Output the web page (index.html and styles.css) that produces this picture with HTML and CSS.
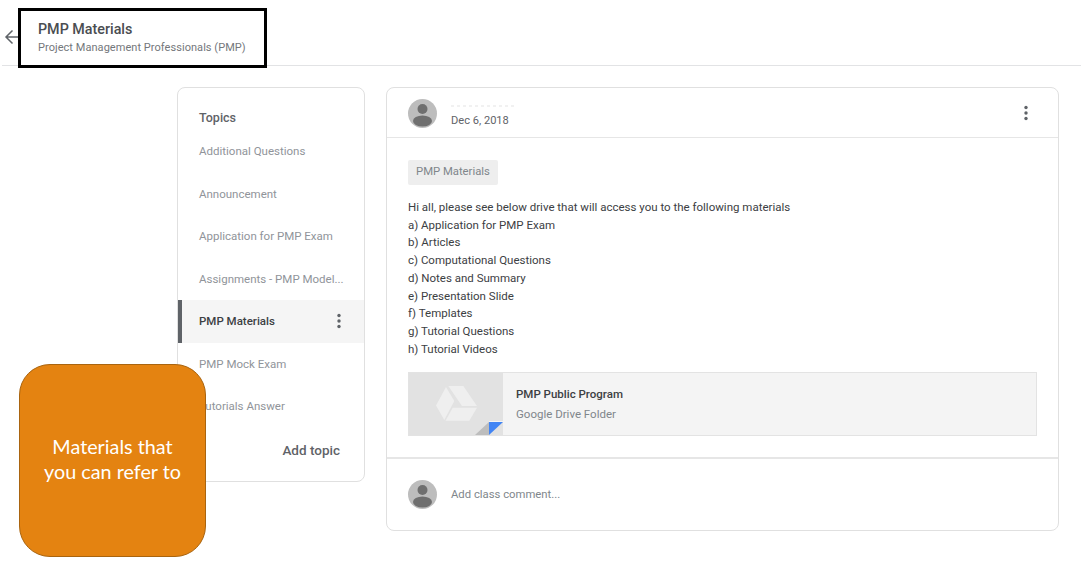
FILE: index.html
```html
<!DOCTYPE html>
<html lang="en">
<head>
<meta charset="utf-8">
<title>PMP Materials</title>
<link rel="stylesheet" href="styles.css">
</head>
<body>
<header class="topbar">
  <svg class="back" viewBox="0 0 16 16" width="16" height="16"><path d="M15 8H2M8.500 1.500 2 8l6.500 6.500" fill="none" stroke="#5f6368" stroke-width="1.500"/></svg>
  <div class="titlebox">
    <div class="title">PMP Materials</div>
    <div class="subtitle">Project Management Professionals (PMP)</div>
  </div>
</header>
<main class="page">
  <aside class="topics">
    <h2 class="topics-head">Topics</h2>
    <ul class="topic-list">
      <li class="topic">Additional Questions</li>
      <li class="topic">Announcement</li>
      <li class="topic">Application for PMP Exam</li>
      <li class="topic">Assignments - PMP Model...</li>
      <li class="topic active">PMP Materials
        <svg class="dots" viewBox="0 0 4 16" width="4" height="16"><circle cx="2" cy="2.500" r="1.700"/><circle cx="2" cy="8" r="1.700"/><circle cx="2" cy="13.500" r="1.700"/></svg>
      </li>
      <li class="topic">PMP Mock Exam</li>
      <li class="topic">Tutorials Answer</li>
    </ul>
    <div class="add-topic">Add topic</div>
  </aside>
  <article class="post">
    <div class="post-head">
      <svg class="avatar" viewBox="0 0 29 29" width="29" height="29"><circle cx="14.500" cy="14.500" r="14.500" fill="#bdbdbd"/><circle cx="14.500" cy="10" r="5" fill="#6f6f6f"/><ellipse cx="14.500" cy="22" rx="9.500" ry="5.500" fill="#6f6f6f"/></svg>
      <div class="meta">
        <div class="name-blur"></div>
        <div class="date">Dec 6, 2018</div>
      </div>
      <svg class="dots post-dots" viewBox="0 0 4 16" width="4" height="16"><circle cx="2" cy="2.500" r="1.700"/><circle cx="2" cy="8" r="1.700"/><circle cx="2" cy="13.500" r="1.700"/></svg>
    </div>
    <div class="post-body">
      <span class="tag">PMP Materials</span>
      <div class="message">
        <p>Hi all, please see below drive that will access you to the following materials</p>
        <p>a) Application for PMP Exam</p>
        <p>b) Articles</p>
        <p>c) Computational Questions</p>
        <p>d) Notes and Summary</p>
        <p>e) Presentation Slide</p>
        <p>f) Templates</p>
        <p>g) Tutorial Questions</p>
        <p>h) Tutorial Videos</p>
      </div>
      <div class="attachment">
        <div class="thumb">
          <svg class="drive" viewBox="0 0 41 35" width="41" height="35"><path d="M12.300 0h15L41 20H26ZM10 1l8.300 14L8.300 34 0 19.500ZM16.700 21.700H41L33.300 34.700H9.500Z" fill="#efefef"/></svg>
          <svg class="fold" viewBox="0 0 28 14" width="28" height="14"><path d="M0 14 14 1v13Z" fill="#bdbdbd"/><path d="M14 1h14L14 14Z" fill="#4285f4"/><path d="M14 0h14v1H14Z" fill="#f4f4f4"/></svg>
        </div>
        <div class="att-text">
          <div class="att-title">PMP Public Program</div>
          <div class="att-sub">Google Drive Folder</div>
        </div>
      </div>
    </div>
    <div class="comment">
      <svg class="avatar" viewBox="0 0 29 29" width="29" height="29"><circle cx="14.500" cy="14.500" r="14.500" fill="#bdbdbd"/><circle cx="14.500" cy="10" r="5" fill="#6f6f6f"/><ellipse cx="14.500" cy="22" rx="9.500" ry="5.500" fill="#6f6f6f"/></svg>
      <span class="comment-text">Add class comment...</span>
    </div>
  </article>
</main>
<div class="callout">Materials that<br>you can refer to</div>
</body>
</html>
```
FILE: styles.css
```css
* { box-sizing: border-box; }
html, body { margin: 0; padding: 0; }
body { width: 1081px; height: 577px; overflow: hidden; background: #fff; font-family: Roboto, "Liberation Sans", sans-serif; color: #3c4043; position: relative; }

.topbar { height: 66px; margin-left: 2px; border-bottom: 1px solid #e2e3e5; display: flex; align-items: center; padding-left: 2px; padding-top: 8px; }
.back { flex: none; }
.titlebox { position: absolute; left: 18px; top: 8px; width: 249px; height: 60px; border: 3px solid #000; background: #fff; padding: 9px 0 0 17px; }
.title { font-size: 14.300px; line-height: 18px; font-weight: 500; color: #4a4d51; }
.subtitle { font-size: 11px; line-height: 16px; margin-top: 2px; color: #74777b; letter-spacing: 0.05px; }

.page { display: flex; align-items: flex-start; gap: 21px; padding: 21px 0 0 177px; }

.topics { width: 188px; height: 395px; flex: none; border: 1px solid #e0e0e0; border-radius: 8px; padding-top: 21px; }
.topics-head { margin: 0 0 0 21px; font-size: 12.500px; line-height: 18px; font-weight: 500; color: #5f6368; }
.topic-list { list-style: none; margin: 3px 0 0; padding: 0; }
.topic { height: 42.500px; padding-left: 21px; display: flex; align-items: center; justify-content: space-between; font-size: 11.500px; color: #90949a; padding-right: 23px; white-space: nowrap; }
.topic.active { background: #f5f5f5; border-left: 4px solid #5f6368; padding-left: 17px; font-weight: 500; color: #3c4043; }
.dots { fill: #5f6368; flex: none; display: block; }
.add-topic { margin: 13px 24px 0 0; text-align: right; font-size: 13.500px; line-height: 18px; font-weight: 500; color: #5f6368; }

.post { width: 673px; height: 444px; flex: none; border: 1px solid #e0e0e0; border-radius: 8px; display: flex; flex-direction: column; }
.post-head { height: 50px; flex: none; border-bottom: 1px solid #e6e6e6; display: flex; align-items: center; padding: 1px 30px 0 21px; }
.avatar { flex: none; display: block; }
.meta { margin-left: 14px; flex: 1; padding-top: 7px; }
.name-blur { width: 64px; height: 2px; margin-bottom: 7px; background: repeating-linear-gradient(90deg, #f1f1f1 0 3px, #fff 3px 6px); }
.date { font-size: 11.100px; line-height: 14px; color: #5f6368; }
.post-head .post-dots { margin-top: -1px; }

.post-body { height: 321px; flex: none; border-bottom: 2px solid #e6e6e6; padding: 22px 21px 0; }
.tag { display: inline-block; height: 25px; padding: 0 8px; line-height: 24px; font-size: 11.300px; color: #80868b; background: #eee; border-radius: 2px; }
.message { margin-top: 14px; font-size: 11.500px; line-height: 17.700px; color: #3c4043; }
.message p { margin: 0; }

.attachment { margin-top: 14px; height: 64px; display: flex; border: 1px solid #e3e3e3; background: #f4f4f4; }
.thumb { width: 94px; flex: none; background: #e2e2e2; position: relative; display: flex; align-items: center; justify-content: center; padding-bottom: 1px; }
.fold { position: absolute; right: 0; bottom: 0; }
.att-text { padding: 13px 0 0 13px; }
.att-title { font-size: 11.500px; line-height: 17px; font-weight: 500; color: #3c4043; }
.att-sub { font-size: 11.500px; line-height: 17px; margin-top: 3px; color: #80868b; }

.comment { flex: 1; display: flex; align-items: center; padding-left: 21px; }
.comment-text { margin-left: 14px; font-size: 11.300px; color: #80868b; }

.callout { position: absolute; left: 19px; top: 364px; width: 187px; height: 193px; background: #e48311; border: 1px solid #a9640f; border-radius: 31px; color: #fff; font-family: Lato, "Open Sans", sans-serif; font-size: 19.800px; line-height: 25px; text-align: center; padding-top: 69px; }
```
